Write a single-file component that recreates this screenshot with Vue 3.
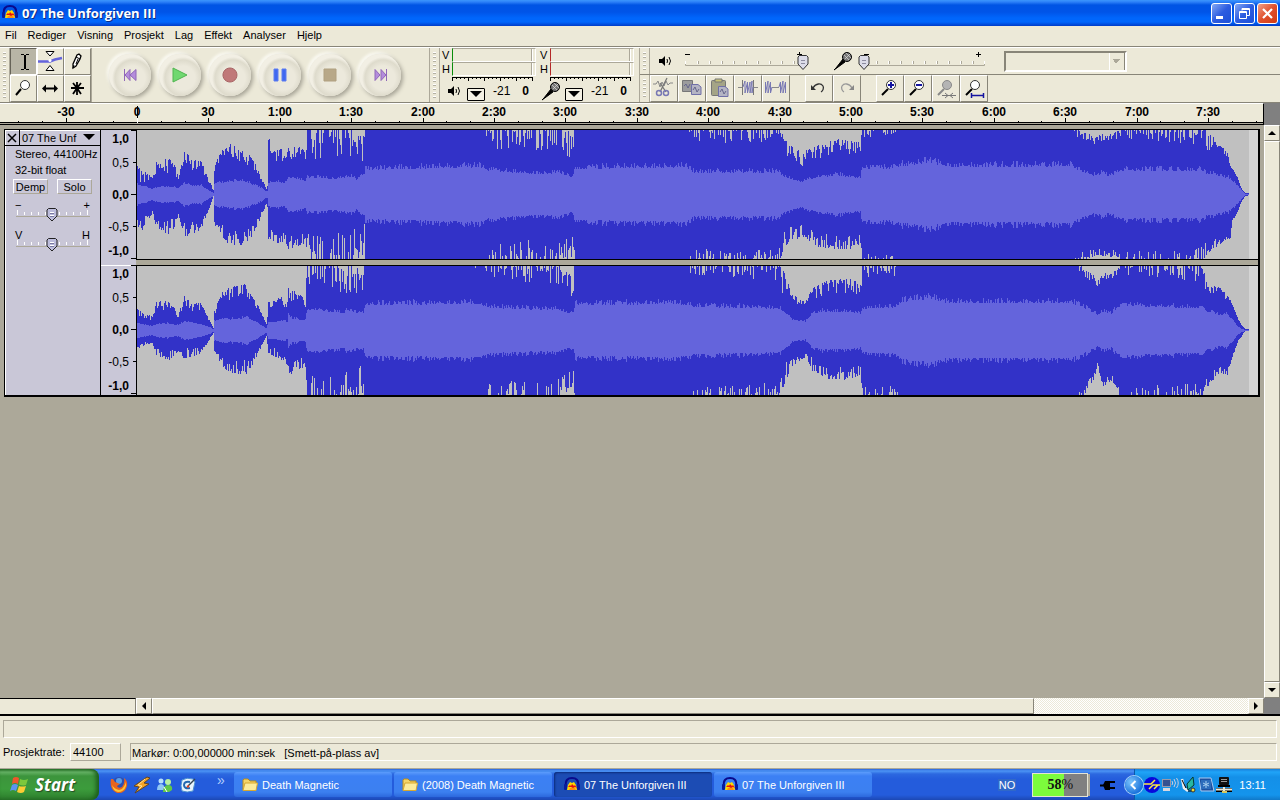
<template>
  <div class="desktop">
    <header class="title-bar">
      <svg class="app-icon" viewBox="0 0 16 16">
        <path d="M2 9 C1 3 4 1 8 1 C12 1 15 3 14 9" fill="none" stroke="#0a0a8c" stroke-width="2" />
        <path d="M3 13 L4 8 L6 5 L8 6 L10 5 L12 8 L13 13 Z" fill="#ffd800" />
        <path d="M4 10 L6 8 L7 9 L8 7 L10 9 L11 8 L13 11 L11 10 L9 11 L7 10 Z" fill="#e81010" />
        <path d="M5 13 L12 13 L11 11 L6 11 Z" fill="#ff8c10" />
        <rect x="0" y="7" width="3" height="6" rx="1" fill="#0a1c9c" />
        <rect x="13" y="7" width="3" height="6" rx="1" fill="#0a1c9c" />
      </svg>
      <h1>07 The Unforgiven III</h1>
      <div class="window-buttons">
        <button aria-label="Minimer">
          <svg viewBox="0 0 21 21"><rect x="5" y="13" width="7" height="3" fill="#fff" /></svg>
        </button>
        <button aria-label="Gjenopprett">
          <svg viewBox="0 0 21 21" fill="none" stroke="#fff">
            <path d="M8 7.5V5.5H15.5V12.5H13M8 6.5H15" />
            <path d="M5.5 8.5H12.5V15.5H5.5ZM5 9.5H12" />
          </svg>
        </button>
        <button class="close" aria-label="Lukk">
          <svg viewBox="0 0 21 21"><path d="M6 6L15 15M15 6L6 15" stroke="#fff" stroke-width="2.2" /></svg>
        </button>
      </div>
    </header>

    <nav class="menu-bar">
      <a v-for="item in menus" :key="item" href="#">{{ item }}</a>
    </nav>

    <section class="toolbars">
      <div class="toolbar">
        <div class="grip"></div>
        <div class="tool-grid">
          <button class="tool active" aria-label="Markeringsverktøy">
            <svg viewBox="0 0 27 27" fill="none" stroke="#000" shape-rendering="crispEdges">
              <path d="M11 6.500H14M16 6.500H19M15 7V21M11 21.500H14M16 21.500H19" stroke-width="1" />
              <path d="M15 7V21" stroke-width="2" />
            </svg>
          </button>
          <button class="tool" aria-label="Konvoluttverktøy">
            <svg viewBox="0 0 27 27">
              <path d="M1 13.500H13L18 11.500L25 10" fill="none" stroke="#6464dc" stroke-width="2.500" />
              <path d="M9 3.500H17L13 8ZM9 22.500H17L13 17.500Z" fill="#fff" stroke="#000" />
              <circle cx="13" cy="12.500" r="1.500" fill="#fff" />
            </svg>
          </button>
          <button class="tool" aria-label="Tegneverktøy">
            <svg viewBox="0 0 27 27">
              <path d="M9 20L9 16L13 7L15 6L17 8L16 11L12 18Z" fill="#fff" stroke="#000" stroke-width="1.3" />
              <path d="M12 9L16 11M12 16L14 11M9 20L10 17" stroke="#000" />
            </svg>
          </button>
          <button class="tool" aria-label="Zoomverktøy">
            <svg viewBox="0 0 27 27">
              <path d="M11 14L6 20" stroke="#000" stroke-width="2" />
              <circle cx="15" cy="10" r="4.500" fill="#fff" stroke="#333" />
            </svg>
          </button>
          <button class="tool" aria-label="Tidsforskyvning">
            <svg viewBox="0 0 27 27"><path d="M5 13.500L9 9.500V12.500H17V9.500L21 13.500L17 17.500V14.500H9V17.500Z" /></svg>
          </button>
          <button class="tool" aria-label="Multiverktøy">
            <svg viewBox="0 0 27 27">
              <path d="M13 7V20M7 13H20M9 19L13 13L17 19M9 8L13 13L17 8" fill="none" stroke="#000" stroke-width="1.800" />
            </svg>
          </button>
        </div>
      </div>

      <div class="toolbar transport">
        <button v-for="t in transport" :key="t.label" class="disc" :aria-label="t.label">
          <svg viewBox="0 0 24 24">
            <path :d="t.path" :fill="t.color" :stroke="t.edge" />
          </svg>
        </button>
      </div>

      <div class="toolbar">
        <div class="grip"></div>
        <div v-for="m in meters" :key="m.kind" class="meter">
          <div v-for="ch in ['V', 'H']" :key="ch" class="meter-row">
            <span>{{ ch }}</span>
            <div class="meter-bar" :class="m.kind"></div>
          </div>
          <svg class="meter-scale" viewBox="0 0 82 5">
            <path d="M0 0.500H80" stroke="#000" />
            <path v-for="n in 21" :key="n" :d="`M${(n - 1) * 4 + 0.5} 0V${(n - 1) % 4 ? 2 : 4}`" stroke="#000" />
          </svg>
          <div class="meter-foot">
            <svg v-if="m.kind === 'play'" class="foot-icon" viewBox="0 0 20 20">
              <path d="M5 8H8L11 5V15L8 12H5Z" />
              <path d="M13 8Q14 10 13 12M15 6Q18 10 15 14" fill="none" stroke="#000" />
            </svg>
            <svg v-else class="foot-icon" viewBox="0 0 20 20">
              <path d="M10 8L3 17L1 19L12 11Z" stroke="#000" />
              <circle cx="14" cy="6" r="4.500" fill="#777" stroke="#000" />
              <path d="M11 4L16 9M13 2L18 7M12 8L17 3" stroke="#ddd" stroke-width="0.7" />
            </svg>
            <button class="meter-menu" aria-label="Nivåmeny">
              <svg viewBox="0 0 18 13"><path d="M3 3H15L9 9Z" /></svg>
            </button>
            <span>-21</span>
            <b>0</b>
          </div>
        </div>
      </div>

      <div class="right-bars">
        <div class="bar-row">
          <div class="grip"></div>
          <div v-for="(s, i) in mixer" :key="s.label" class="mixer-item">
            <svg v-if="i === 0" class="foot-icon" viewBox="0 0 20 20">
              <path d="M5 8H8L11 5V15L8 12H5Z" />
              <path d="M13 8Q14 10 13 12M15 6Q18 10 15 14" fill="none" stroke="#000" />
            </svg>
            <svg v-else class="foot-icon" viewBox="0 0 20 20">
              <path d="M10 8L3 17L1 19L12 11Z" stroke="#000" />
              <circle cx="14" cy="6" r="4.500" fill="#777" stroke="#000" />
              <path d="M11 4L16 9M13 2L18 7M12 8L17 3" stroke="#ddd" stroke-width="0.7" />
            </svg>
            <div class="slider mixer-slider">
              <svg viewBox="0 0 134 26">
                <path d="M8.500 13V17.500H128.500V13" fill="none" stroke="#aca899" />
                <path
                  v-for="n in 11"
                  :key="n"
                  :d="`M${(n - 1) * 12 + 8.5} 13V16`"
                  stroke="#fff"
                />
                <path v-for="n in 9" :key="`s${n}`" :d="`M${n * 12 + 9.5} 13V16`" stroke="#aca899" />
                <path d="M8 6.500H13M120 6.500H125M122.500 4V9" stroke="#000" />
                <g :transform="`translate(${8 + s.value * 1.18} 8)`">
                  <path d="M-5 1L-3.500 -0.500H3.500L5 1V8L0 13.500L-5 8Z" fill="#dcdce8" stroke="#333" />
                  <path d="M-2 4.500H2M-2 7.500H2" stroke="#8c8ca0" />
                </g>
              </svg>
              <input v-model.number="s.value" type="range" min="0" max="100" :aria-label="s.label" />
            </div>
          </div>
          <select class="source" disabled aria-label="Inngangskilde">
            <option></option>
          </select>
        </div>
        <div class="bar-row edit-row">
          <div class="grip"></div>
          <button class="tool" aria-label="Klipp ut">
            <svg viewBox="0 0 27 27" fill="none">
              <path d="M3 9H6L8 6L10 12L12 7L14 11L16 6L18 10L20 8H23" stroke="#888" />
              <path d="M17 3L10 17M10 8L16 17" stroke="#777" stroke-width="1.3" />
              <circle cx="9" cy="18" r="2.500" stroke="#7878b4" stroke-width="1.5" />
              <circle cx="16" cy="18" r="2.500" stroke="#7878b4" stroke-width="1.5" />
            </svg>
          </button>
          <button class="tool" aria-label="Kopier">
            <svg viewBox="0 0 27 27">
              <path d="M4.500 5.500H14.500V16.500H4.500Z" fill="#9c9c9c" stroke="#777" />
              <path d="M13.500 9.500H20L23 12V19.500H13.500Z" fill="#b4b4c4" stroke="#7070a8" />
              <path d="M6 11L8 9L10 13L12 9M15 15L17 12L19 17L21 14" fill="none" stroke="#66668c" />
            </svg>
          </button>
          <button class="tool" aria-label="Lim inn">
            <svg viewBox="0 0 27 27">
              <rect x="5.500" y="5.500" width="14" height="15" rx="1" fill="#a4a486" stroke="#777" />
              <path d="M9 7V4H16V7Z" fill="#c8c478" stroke="#777" />
              <path d="M12.500 11.500H19L22 14V21.500H12.500Z" fill="#b4b4c4" stroke="#7070a8" />
              <path d="M14 17L16 14L18 19L20 16" fill="none" stroke="#66668c" />
            </svg>
          </button>
          <button class="tool" aria-label="Trim">
            <svg viewBox="0 0 27 27" fill="none">
              <path d="M4 12.500H8M19 12.500H24" stroke="#888" />
              <path d="M8.500 5V20M19.500 5V20" stroke="#777" />
              <path d="M9 12L11 6V18L13.500 7V18L16 7V18L18 6V18L19 12" stroke="#7878b4" />
            </svg>
          </button>
          <button class="tool" aria-label="Stilne">
            <svg viewBox="0 0 27 27" fill="none">
              <path d="M10 12.500H17" stroke="#888" />
              <path d="M3.500 12V7V18L6 6V18L8.500 7V18L10 12M17 12L18.500 7V18L21 6V18L23.500 7V18" stroke="#7878b4" />
            </svg>
          </button>
          <div class="spacer"></div>
          <button class="tool" aria-label="Angre">
            <svg viewBox="0 0 27 27">
              <path d="M8 13C11 8 16 8 18 11C19 13 18 16 16 17" fill="none" stroke="#333" stroke-width="1.300" />
              <path d="M6 10V15H11Z" fill="#333" />
            </svg>
          </button>
          <button class="tool" aria-label="Gjør om" disabled>
            <svg viewBox="0 0 27 27">
              <path d="M19 13C16 8 11 8 9 11C8 13 9 16 11 17" fill="none" stroke="#999" stroke-width="1.300" />
              <path d="M21 10V15H16Z" fill="#888" />
            </svg>
          </button>
          <div class="spacer"></div>
          <button v-for="z in zooms" :key="z.label" class="tool" :aria-label="z.label">
            <svg viewBox="0 0 27 27" fill="none">
              <path d="M12 14L6 20" :stroke="z.dim ? '#888' : '#000'" stroke-width="2" />
              <circle cx="15" cy="10" r="4.500" :fill="z.dim ? '#b4b4b4' : '#fff'" :stroke="z.dim ? '#888' : '#333'" />
              <path :d="z.mark" :stroke="z.dim ? '#777' : '#1414a0'" :stroke-width="z.weight" />
            </svg>
          </button>
        </div>
      </div>
    </section>

    <section class="ruler-row">
      <svg class="time-ruler">
        <g shape-rendering="crispEdges" stroke="#000">
          <path v-for="t in ticks" :key="t.x" :d="`M${t.x + 0.5} ${t.major ? 14 : 17}V19`" />
          <path d="M137.500 2V14" />
          <path d="M137.500 14V19" stroke="#fff" />
        </g>
        <text v-for="l in labels" :key="l.text" :x="l.x" y="12" text-anchor="middle">{{ l.text }}</text>
      </svg>
      <div class="corner"></div>
    </section>

    <main class="workspace">
      <div class="track-area">
        <article class="track">
          <div class="track-panel">
            <div class="track-head">
              <button class="track-close" aria-label="Lukk spor">
                <svg viewBox="0 0 14 15"><path d="M3 4L11 12M11 4L3 12" stroke="#000" stroke-width="1.5" /></svg>
              </button>
              <button class="track-name">
                <span>07 The Unf</span>
                <svg viewBox="0 0 12 7"><path d="M0 0H12L6 6Z" /></svg>
              </button>
            </div>
            <p>Stereo, 44100Hz</p>
            <p>32-bit float</p>
            <div class="track-buttons">
              <button>Demp</button>
              <button>Solo</button>
            </div>
            <div v-for="s in trackSliders" :key="s.label" class="track-slider">
              <div class="ends"><span>{{ s.low }}</span><span>{{ s.high }}</span></div>
              <div class="slider">
                <svg viewBox="0 0 76 14">
                  <path d="M1 8.500H75" stroke="#aca899" />
                  <path v-for="n in 11" :key="n" :d="`M${(n - 1) * 7 + 2.5} ${n % 10 === 1 ? 2 : 4}V7`" stroke="#fff" />
                  <g :transform="`translate(${s.value * 0.72 + 1} 0)`">
                    <path d="M-5 2L-3.500 0.500H3.500L5 2V8L0 13L-5 8Z" fill="#bcbcdc" stroke="#222" />
                    <path d="M-2 4.500H2M-2 7.500H2" stroke="#fff" />
                    <path d="M-2 5.500H2M-2 8.500H2" stroke="#7878a0" />
                  </g>
                </svg>
                <input v-model.number="s.value" type="range" min="0" max="100" :aria-label="s.label" />
              </div>
            </div>
          </div>
          <div class="channels">
            <div v-for="(c, i) in channels" :key="i" class="channel">
              <svg class="level-ruler" viewBox="0 0 35 130">
                <text v-for="l in levels" :key="l.text" x="28" :y="l.y" :class="{ strong: l.strong }" text-anchor="end">
                  {{ l.text }}
                </text>
                <path d="M30 0.500H35M32 32.500H35M30 64.500H35M32 96.500H35M30 128.500H35" stroke="#000" />
              </svg>
              <div class="wave-view">
                <svg class="wave" viewBox="0 0 1112 129" shape-rendering="crispEdges">
                  <rect width="1112" height="129" fill="#c0c0c0" />
                  <path :d="c.peak" fill="#3232c8" />
                  <path :d="c.rms" fill="#6464dc" />
                </svg>
              </div>
            </div>
          </div>
        </article>
      </div>
      <div class="v-scroll">
        <button aria-label="Rull opp"><svg viewBox="0 0 8 8"><path d="M0 6H8L4 2Z" /></svg></button>
        <div class="thumb"></div>
        <button aria-label="Rull ned"><svg viewBox="0 0 8 8"><path d="M0 2H8L4 6Z" /></svg></button>
      </div>
    </main>

    <div class="h-scroll">
      <div class="h-blank"></div>
      <button aria-label="Rull til venstre"><svg viewBox="0 0 8 8"><path d="M6 0V8L2 4Z" /></svg></button>
      <div class="h-track"><div class="thumb"></div></div>
      <button aria-label="Rull til høyre"><svg viewBox="0 0 8 8"><path d="M2 0V8L6 4Z" /></svg></button>
      <div class="corner"></div>
    </div>

    <footer class="status">
      <div class="sunken message"></div>
      <div class="status-row">
        <label for="rate">Prosjektrate:</label>
        <input id="rate" v-model="rate" class="rate" type="text" />
        <div class="sunken cursor-info">Markør: 0:00,000000 min:sek &nbsp; [Smett-på-plass av]</div>
      </div>
    </footer>

    <div class="taskbar">
      <button class="start">
        <svg viewBox="0 0 20 18">
          <path d="M3 2Q6 0 9 2L8 8Q5 6 2 8Z" fill="#f0562c" />
          <path d="M10 3Q14 5 18 3L16 9Q13 10 9 8.500Z" fill="#7cc83c" />
          <path d="M2 9Q5 7 8 9L6 15Q3 13 0 15Z" fill="#5c94f0" />
          <path d="M9 10Q12 11 16 10L14 16Q11 18 7 16Z" fill="#fccc34" />
        </svg>
        Start
      </button>
      <div class="quick">
        <button aria-label="Firefox">
          <svg viewBox="0 0 18 18">
            <circle cx="9" cy="8" r="7" fill="#2c50b4" />
            <circle cx="9" cy="5" r="3" fill="#58a0e8" />
            <path d="M1 3Q-1 14 7 17Q15 18 17 10Q18 5 14 2Q15 8 12 11Q8 13 7 10L10 8L5 6L3 3Z" fill="#e8641c" />
            <path d="M2 9Q3 15 8 16Q14 16 16 10L16 6Q14 13 9 14Q4 13 2 9Z" fill="#fcc434" />
          </svg>
        </button>
        <button aria-label="Winamp">
          <svg viewBox="0 0 18 18">
            <path d="M14 1L17 2L11 7L16 8L2 17L6 11L1 10Z" fill="#f4a428" stroke="#5c4428" />
            <path d="M12 3L5 9L9 10L6 13" fill="none" stroke="#ffe49c" />
          </svg>
        </button>
        <button aria-label="Messenger">
          <svg viewBox="0 0 18 18">
            <circle cx="5" cy="5" r="2.500" fill="#b8e0fc" />
            <path d="M1 14Q1 8 5 8Q9 8 8 14Z" fill="#90c8f4" />
            <circle cx="12" cy="6" r="3" fill="#b8f0a0" />
            <path d="M7 16Q7 9 12 9Q17 9 16 14L13 16Z" fill="#60c848" />
            <path d="M8 11L11 16" stroke="#fff" />
          </svg>
        </button>
        <button aria-label="Vis skrivebordet">
          <svg viewBox="0 0 18 18">
            <path d="M3 4Q8 1 14 3L16 6L14 15Q8 17 3 15Q1 10 3 4Z" fill="#e8f4fc" stroke="#4c90d0" />
            <path d="M11 6Q5 5 5 9Q5 13 11 12" fill="none" stroke="#2468b0" stroke-width="2" />
            <path d="M9 10L16 3" stroke="#345" stroke-width="1.5" />
            <path d="M8 11L10 10" stroke="#e04020" stroke-width="2" />
          </svg>
        </button>
        <span class="more">»</span>
      </div>
      <div class="tasks">
        <button v-for="(t, i) in tasks" :key="i" class="task" :class="{ active: t.active }">
          <svg v-if="t.folder" viewBox="0 0 16 16">
            <path d="M1 13V3L2 2H6L8 4H14V6" fill="#f4d468" stroke="#b88c1c" />
            <path d="M1 13.500L3 6H15.500L14 13.500Z" fill="#fcec9c" stroke="#d8a830" />
          </svg>
          <svg v-else viewBox="0 0 16 16">
            <path d="M2 9 C1 3 4 1 8 1 C12 1 15 3 14 9" fill="none" stroke="#0a0a8c" stroke-width="2" />
            <path d="M3 13 L4 8 L6 5 L8 6 L10 5 L12 8 L13 13 Z" fill="#ffd800" />
            <path d="M4 10 L6 8 L7 9 L8 7 L10 9 L11 8 L13 11 L11 10 L9 11 L7 10 Z" fill="#e81010" />
            <path d="M5 13 L12 13 L11 11 L6 11 Z" fill="#ff8c10" />
            <rect x="0" y="7" width="3" height="6" rx="1" fill="#0a1c9c" />
            <rect x="13" y="7" width="3" height="6" rx="1" fill="#0a1c9c" />
          </svg>
          {{ t.text }}
        </button>
      </div>
      <span class="lang">NO</span>
      <div class="battery"><b>58</b>%</div>
      <svg class="plug" viewBox="0 0 18 18">
        <path d="M4 9L6 5H11V14H6Z" />
        <path d="M1 9.500H5M11 6H16M11 12H16" stroke="#000" stroke-width="2" />
      </svg>
      <div class="tray">
        <button class="expand" aria-label="Vis skjulte ikoner">
          <svg viewBox="0 0 18 18"><path d="M10.500 5L6.500 9L10.500 13" fill="none" stroke="#fff" stroke-width="2" /></svg>
        </button>
        <svg viewBox="0 0 18 18">
          <circle cx="9" cy="9" r="8" fill="#0808dc" />
          <path d="M1 8H8L12 4M6 13L10 9H17M11 13L15 9" fill="none" stroke="#fcec44" stroke-width="1.5" />
        </svg>
        <svg viewBox="0 0 18 18">
          <rect x="1.500" y="3.500" width="8" height="7" fill="#345090" stroke="#99a" />
          <path d="M2 12H9V15H2Z" fill="#d8d8e0" />
          <path d="M11 5Q12.500 7 11 9M13 3Q16 7 13 11M15.500 2Q19 7 15.500 12" fill="none" stroke="#ccd" />
        </svg>
        <svg viewBox="0 0 18 18">
          <path d="M3 3L5 12L9 15" fill="none" stroke="#eee" stroke-width="2.500" />
          <path d="M14 1L15 9L9 14L8 8Z" fill="#28b8a0" stroke="#083830" />
          <path d="M3 4L7 12M9 15L14 15" stroke="#000" />
          <circle cx="14" cy="14" r="2" fill="#f0dc38" stroke="#333" />
        </svg>
        <svg viewBox="0 0 18 18">
          <path d="M2 2H14L17 15H4Z" fill="#1c50a0" stroke="#a8c8f0" />
          <rect x="4" y="4" width="10" height="9" fill="#2c6cbc" />
          <path d="M9 5V12M6 7L12 10M12 7L6 10" stroke="#a8d0f0" />
        </svg>
        <svg viewBox="0 0 18 18">
          <rect x="4" y="1" width="10" height="8" rx="1" fill="#111" />
          <path d="M6 3.500H12M6 5.500H12" stroke="#999" />
          <path d="M3 9H15V11H3Z" />
          <path d="M1 14H17" stroke="#000" stroke-width="4" />
          <path d="M1 13.500H17M9 11V15" stroke="#ece9d8" stroke-width="2" />
          <path d="M7 16H12" stroke="#d8c860" stroke-width="2" />
        </svg>
        <time>13:11</time>
      </div>
    </div>
  </div>
</template>

<script setup>
import { reactive, ref } from 'vue'

const menus = ['Fil', 'Rediger', 'Visning', 'Prosjekt', 'Lag', 'Effekt', 'Analyser', 'Hjelp']

const transport = [
  { label: 'Til start', path: 'M6.5 6V18M12 6.500V17.500L7 12ZM18 6.500V17.500L12 12Z', color: '#b48cdc', edge: '#9068b8' },
  { label: 'Spill av', path: 'M5 5L19 12L5 19Z', color: '#70d870', edge: '#50b450' },
  { label: 'Ta opp', path: 'M12 5A7 7 0 1 1 11.900 5Z', color: '#c07878', edge: '#a86464' },
  { label: 'Pause', path: 'M6 6H10V18H6ZM14 6H18V18H14Z', color: '#4068f0', edge: '#5c7cf0' },
  { label: 'Stopp', path: 'M6 6H18V18H6Z', color: '#b8a888', edge: '#b0a080' },
  { label: 'Til slutt', path: 'M18.500 6V18M7 6.500V17.500L12 12ZM13 6.500V17.500L18 12Z', color: '#b48cdc', edge: '#9068b8' }
]

const meters = [{ kind: 'play' }, { kind: 'record' }]

const mixer = reactive([
  { label: 'Utgangsvolum', value: 100 },
  { label: 'Inngangsvolum', value: 0 }
])

const trackSliders = reactive([
  { label: 'Forsterkning', low: '−', high: '+', value: 50 },
  { label: 'Panorering', low: 'V', high: 'H', value: 50 }
])

const zooms = [
  { label: 'Zoom inn', mark: 'M12 10H18M15 7V13', weight: 2 },
  { label: 'Zoom ut', mark: 'M12 10H18', weight: 2 },
  { label: 'Tilpass markering', mark: 'M10 20.500H24M13 18L16 20.500L13 23M21 18L18 20.500L21 23', weight: 1, dim: true },
  { label: 'Tilpass prosjekt', mark: 'M11 20.500H23M11.500 18V23M23.500 18V23', weight: 1.5 }
]

const tasks = [
  { text: 'Death Magnetic', folder: true },
  { text: '(2008) Death Magnetic', folder: true },
  { text: '07 The Unforgiven III', active: true },
  { text: '07 The Unforgiven III' }
]

const rate = ref('44100')

// time ruler, 10 seconds between two ticks
const origin = 137
const tenSeconds = 23.8
const ticks = []
const labels = []
for (let n = -5; n <= 47; n++) {
  const x = Math.round(origin + n * tenSeconds)
  const major = n % 3 === 0
  ticks.push({ x, major })
  if (major) {
    const s = Math.abs(n * 10)
    const short = s < 60 ? String(s) : `${Math.floor(s / 60)}:${String(s % 60).padStart(2, '0')}`
    labels.push({ x, text: n < 0 ? `-${short}` : short })
  }
}

const levels = [
  { text: '1,0', y: 13, strong: true },
  { text: '0,5', y: 37 },
  { text: '0,0', y: 69, strong: true },
  { text: '-0,5', y: 101 },
  { text: '-1,0', y: 125, strong: true }
]

// [x, peak up, peak down, rms, spread]
const left = [
  [0, 28, 33, 10, 10], [4, 24, 38, 9, 14], [9, 22, 26, 8, 8], [15, 16, 20, 5, 6], [19, 32, 32, 7, 12],
  [31, 37, 40, 8, 16], [38, 28, 32, 7, 11], [41, 16, 19, 6, 4], [47, 43, 43, 11, 17], [54, 36, 40, 9, 13],
  [64, 33, 34, 9, 9], [70, 18, 18, 5, 4], [76, 4, 2, 1, 1], [77, 28, 29, 11, 6], [83, 42, 40, 12, 12],
  [93, 50, 51, 13, 16], [104, 45, 50, 14, 14], [113, 38, 44, 11, 10], [121, 25, 28, 8, 6], [129, 6, 10, 3, 2],
  [130, 8, 12, 3, 1], [131, 56, 45, 12, 4], [132, 56, 45, 12, 4], [134, 42, 46, 13, 12], [148, 46, 50, 12, 13],
  [151, 48, 54, 18, 14], [162, 48, 52, 16, 14], [168, 42, 48, 14, 10], [170, 72, 74, 18, 38], [200, 71, 73, 16, 38],
  [214, 70, 73, 19, 42], [219, 50, 58, 15, 26], [223, 70, 68, 20, 42], [227, 60, 60, 20, 34], [228, 80, 80, 26, 10],
  [343, 80, 80, 29, 10], [350, 69, 75, 25, 24], [390, 69, 70, 22, 26], [420, 71, 72, 22, 26], [436, 60, 63, 18, 26],
  [438, 80, 80, 27, 10], [548, 80, 80, 29, 10], [556, 68, 71, 23, 18], [642, 67, 68, 23, 16], [646, 58, 54, 18, 24],
  [652, 50, 46, 17, 18], [657, 46, 46, 14, 12], [665, 42, 42, 13, 14], [672, 45, 46, 16, 14], [682, 50, 53, 18, 14],
  [700, 55, 54, 20, 14], [714, 53, 54, 18, 14], [723, 52, 50, 17, 12], [725, 69, 70, 27, 14], [757, 69, 70, 27, 10],
  [764, 80, 80, 30, 8], [793, 80, 80, 34, 8], [810, 80, 80, 29, 8], [934, 78, 80, 30, 12], [940, 64, 68, 26, 10],
  [959, 57, 60, 19, 9], [964, 60, 62, 22, 8], [972, 61, 62, 19, 9], [982, 64, 64, 24, 10], [984, 69, 71, 25, 14],
  [1065, 69, 71, 25, 20], [1069, 64, 60, 22, 22], [1076, 58, 54, 21, 18], [1080, 50, 54, 20, 16], [1086, 46, 46, 18, 9],
  [1090, 41, 45, 17, 6], [1093, 30, 43, 16, 6], [1095, 26, 26, 14, 2], [1100, 17, 18, 9, 2],
  [1104, 6, 7, 4, 1], [1108, 1, 1, 0, 0], [1112, 1, 0, 0, 0]
]
const right = [
  [0, 21, 18, 7, 7], [15, 13, 12, 4, 4], [19, 28, 25, 6, 9], [32, 30, 29, 7, 9], [41, 15, 20, 5, 4],
  [47, 36, 29, 9, 12], [53, 27, 26, 8, 9], [64, 27, 22, 6, 7], [70, 14, 12, 4, 2], [76, 3, 2, 1, 1],
  [77, 21, 21, 9, 5], [85, 38, 35, 11, 12], [93, 43, 43, 11, 13], [109, 46, 43, 13, 14], [113, 36, 38, 11, 9],
  [121, 24, 22, 7, 5], [129, 6, 5, 2, 1], [131, 28, 23, 8, 7], [143, 33, 28, 9, 10], [150, 32, 34, 9, 10],
  [151, 42, 42, 16, 14], [155, 42, 44, 12, 14], [168, 34, 36, 10, 11], [170, 70, 74, 22, 30], [200, 69, 74, 19, 28],
  [207, 58, 68, 18, 30], [210, 70, 70, 20, 30], [226, 58, 64, 18, 36], [228, 80, 80, 27, 10], [320, 80, 80, 28, 10],
  [343, 74, 79, 28, 14], [350, 68, 74, 24, 22], [390, 68, 71, 22, 22], [420, 68, 71, 22, 22], [436, 52, 54, 16, 22],
  [438, 80, 80, 27, 10], [540, 78, 80, 28, 14], [556, 68, 71, 25, 14], [642, 67, 68, 23, 18], [646, 60, 56, 20, 34],
  [651, 46, 44, 16, 16], [655, 36, 35, 11, 8], [668, 28, 26, 9, 4], [675, 42, 40, 18, 14], [690, 50, 48, 20, 14],
  [714, 51, 49, 19, 14], [723, 46, 44, 17, 12], [725, 67, 69, 23, 14], [757, 67, 69, 24, 16],
  [764, 80, 80, 30, 8], [793, 80, 80, 34, 8], [810, 80, 80, 29, 8], [934, 78, 80, 29, 12], [948, 59, 62, 23, 8],
  [955, 57, 52, 19, 9], [960, 48, 38, 16, 6], [965, 58, 56, 20, 8], [974, 58, 50, 17, 8], [979, 59, 56, 23, 8],
  [984, 69, 71, 26, 14], [1065, 66, 70, 23, 20], [1070, 44, 56, 20, 10], [1082, 44, 42, 16, 9],
  [1090, 36, 44, 17, 6], [1094, 28, 30, 12, 3], [1100, 13, 12, 4, 2], [1105, 4, 4, 1, 1],
  [1108, 1, 0, 0, 0], [1112, 1, 0, 0, 0]
]

function randomFrom(seed) {
  let s = seed
  return () => {
    s = (s * 16807) % 2147483647
    return s / 2147483647
  }
}

function outline(up, down) {
  const mid = 64
  let d = `M0 ${mid}`
  up.forEach((v, x) => { d += `V${mid - v}H${x + 1}` })
  for (let x = down.length - 1; x >= 0; x--) d += `V${mid + 1 + down[x]}H${x}`
  return d + 'Z'
}

function buildChannel(points, seed) {
  const rand = randomFrom(seed)
  const up = []
  const down = []
  const rms = []
  let k = 0
  for (let x = 0; x < 1112; x++) {
    while (k < points.length - 2 && points[k + 1][0] <= x) k++
    const a = points[k]
    const b = points[k + 1]
    const f = (x - a[0]) / (b[0] - a[0])
    const [u, dn, r, spread] = [1, 2, 3, 4].map((i) => a[i] + (b[i] - a[i]) * f)
    const limit = (v) => Math.max(0, Math.min(64, Math.round(v)))
    up.push(limit(u - spread * rand() ** 2))
    down.push(limit(dn - spread * rand() ** 2))
    rms.push(limit(r + (rand() ** 2 - 0.4) * r * 0.2))
  }
  return { peak: outline(up, down), rms: outline(rms, rms) }
}

const channels = [buildChannel(left, 4211), buildChannel(right, 977)]
</script>

<style>
body {
  margin: 0;
}
</style>

<style scoped>
.desktop {
  display: flex;
  flex-direction: column;
  height: 100vh;
  overflow: hidden;
  background: #ece9d8;
  font-family: "Liberation Sans", Arial, sans-serif;
  font-size: 11px;
  color: #000;
}

.desktop * {
  box-sizing: border-box;
}

button {
  padding: 0;
  border: 0;
  background: none;
  font: inherit;
  color: inherit;
}

svg {
  display: block;
  flex: none;
}

.title-bar {
  display: flex;
  align-items: center;
  height: 26px;
  padding: 0 2px;
  background: linear-gradient(#3c96fc 0, #2c80f8 2px, #0054e4 5px, #0054e8 12px, #0066fc 18px, #0066fc 22px, #003cc8 26px);
}

.app-icon {
  width: 16px;
  height: 16px;
}

.title-bar h1 {
  flex: 1;
  margin: 0 0 0 4px;
  font: bold 13px "Open Sans", "Noto Sans", sans-serif;
  color: #fff;
  text-shadow: 1px 1px 0 #0c2c84;
}

.window-buttons {
  display: flex;
  gap: 2px;
}

.window-buttons button {
  width: 21px;
  height: 21px;
  border: 1px solid #fff;
  border-radius: 3px;
  background: linear-gradient(135deg, #84a8f4, #2c5ce0 50%, #1c50d8);
}

.window-buttons button svg {
  width: 21px;
  height: 21px;
  margin: -1px;
}

.window-buttons .close {
  background: linear-gradient(135deg, #f0a088, #e0502c 50%, #d03c14);
}

.menu-bar {
  display: flex;
  gap: 11px;
  height: 21px;
  padding: 0 5px;
  line-height: 18px;
  border-bottom: 1px solid #888578;
}

.menu-bar a {
  color: #000;
  text-decoration: none;
}

.toolbars {
  display: flex;
  height: 56px;
  border-top: 1px solid #fff;
  border-bottom: 1px solid #888578;
}

.toolbar {
  display: flex;
  border-right: 1px solid #aca899;
}

.grip {
  width: 10px;
  padding: 4px 3px;
  border-right: 1px solid #aca899;
  flex: none;
  background: repeating-linear-gradient(#fff 0 1px, #b4b1a2 1px 2px, #ece9d8 2px 4px) content-box;
}

.tool-grid {
  display: grid;
  grid-template-columns: repeat(3, 27px);
  grid-template-rows: repeat(2, 27px);
}

.tool {
  width: 27px;
  height: 27px;
  border: 1px solid;
  border-color: #fff #888578 #888578 #fff;
}

.tool svg {
  width: 27px;
  height: 27px;
  margin: -1px;
}

.tool.active {
  background: #b8b5a6;
  border-color: #666358 #fff #fff #666358;
}

.transport {
  align-items: center;
  gap: 8px;
  width: 338px;
  padding-left: 17px;
}

.disc {
  display: grid;
  place-items: center;
  width: 42px;
  height: 42px;
  border-radius: 50%;
  background: radial-gradient(circle at 24px 24px, #ece9dc 12px, #dedbcc 18px, #f2efe4 21px);
  box-shadow: 2px 2px 4px #a4a194, -2px -2px 3px #fcfbf4;
}

.disc svg {
  width: 24px;
  height: 24px;
}

.meter {
  width: 98px;
  padding: 0 2px;
}

.meter:last-child {
  width: 101px;
}

.meter-row {
  display: flex;
  height: 14px;
  line-height: 14px;
}

.meter-row span {
  width: 10px;
}

.meter-bar {
  width: 84px;
  height: 14px;
  border: 1px solid;
  border-color: #aca899 #fff #fff #0a8c0a;
  background: linear-gradient(90deg, #ece9d8 78px, #aca899 78px 79px, #fff 79px 80px, #ece9d8 80px);
}

.meter-bar.record {
  border-left-color: #b42828;
}

.meter-scale {
  width: 82px;
  height: 5px;
  margin: 1px 0 0 10px;
}

.meter-foot {
  display: flex;
  align-items: center;
  height: 18px;
  font-size: 12px;
}

.foot-icon {
  width: 20px;
  height: 20px;
}

.meter-foot .foot-icon {
  margin: 0 4px 0 1px;
}

.meter-menu {
  width: 18px;
  height: 13px;
  margin-top: 6px;
  border: 1px solid #000;
  border-radius: 1px;
  background: #f4f1e4;
}

.meter-menu svg {
  width: 18px;
  height: 13px;
  margin: -1px;
}

.meter-foot span {
  margin-left: 8px;
}

.meter-foot b {
  margin-left: 12px;
}

.right-bars {
  flex: 1;
  min-width: 0;
}

.bar-row {
  display: flex;
  height: 27px;
}

.bar-row:first-child {
  align-items: center;
  border-bottom: 1px solid #888578;
}

.bar-row:first-child .grip {
  align-self: stretch;
}

.mixer-item {
  display: flex;
  align-items: center;
  gap: 3px;
  margin-left: 4px;
}

.mixer-item + .mixer-item {
  margin-left: 22px;
}

.slider {
  display: grid;
}

.slider > * {
  grid-area: 1 / 1;
}

.slider input {
  appearance: none;
  width: 100%;
  height: 100%;
  margin: 0;
  background: transparent;
}

.slider input::-webkit-slider-thumb {
  appearance: none;
  width: 11px;
  height: 14px;
  background: transparent;
}

.mixer-slider svg {
  width: 134px;
  height: 26px;
}

.source {
  appearance: none;
  width: 123px;
  height: 21px;
  margin-left: 14px;
  border: 2px solid;
  border-color: #888578 #fff #fff #888578;
  border-radius: 0;
  opacity: 1;
  background:
    conic-gradient(from 315deg at 50% 100%, #aca899 90deg, transparent 0) right 5px center / 8px 4px no-repeat,
    linear-gradient(90deg, #fff 1px, #ece9d8 1px 15px, #888578 15px) right / 16px 100% no-repeat,
    #ece9d8;
}

.spacer {
  width: 15px;
}

.edit-row .tool {
  width: 28px;
}

.ruler-row,
.h-scroll {
  display: flex;
}

.time-ruler {
  flex: 1;
  min-width: 0;
  height: 22px;
  border: solid;
  border-width: 1px 1px 1px 0;
  border-color: #fff #000 #000 #fff;
  box-shadow: inset 0 -1px #aca899, inset 0 -2px #000;
  overflow: hidden;
}

.time-ruler text {
  font-size: 12px;
  font-weight: bold;
}

.corner {
  width: 16px;
  background: #808080;
}

.workspace {
  display: flex;
  flex: 1;
  min-height: 0;
}

.track-area {
  flex: 1;
  min-width: 0;
  padding: 4px 4px 0;
  background: #aca899;
}

.track {
  display: flex;
  border: 1px solid #000;
  border-right-width: 2px;
  border-bottom-width: 2px;
  background: #aca899;
}

.track-panel {
  width: 96px;
  flex: none;
  border-right: 1px solid #000;
  background: #c9c7d7;
  box-shadow: inset 1px 1px #fff;
}

.track-head {
  display: flex;
  height: 16px;
  border-bottom: 1px solid #000;
}

.track-close {
  width: 15px;
  border-right: 1px solid #000;
}

.track-close svg {
  width: 14px;
  height: 15px;
}

.track-name {
  display: flex;
  align-items: center;
  justify-content: space-between;
  flex: 1;
  padding: 0 5px 0 2px;
}

.track-name svg {
  width: 12px;
  height: 7px;
}

.track-panel p {
  margin: 0 0 0 10px;
  line-height: 16px;
  white-space: nowrap;
}

.track-buttons {
  display: flex;
  gap: 9px;
  margin: 1px 8px 7px;
}

.track-buttons button {
  width: 35px;
  height: 15px;
  border: 1px solid;
  border-color: #fff #aca899 #aca899 #fff;
}

.track-slider {
  margin: 0 10px 9px;
}

.ends {
  display: flex;
  justify-content: space-between;
  height: 7px;
  line-height: 8px;
}

.track-slider .slider svg {
  width: 76px;
  height: 14px;
}

.channels {
  flex: 1;
  min-width: 0;
}

.channel {
  display: flex;
  height: 130px;
}

.channel + .channel {
  margin-top: 5px;
}

.level-ruler {
  width: 35px;
  height: 130px;
  background: #c9c7d7;
  box-shadow: 0 5px #c9c7d7;
}

.channel + .channel .level-ruler {
  box-shadow: inset 0 1px #fff;
}

.level-ruler text {
  font-size: 12px;
}

.level-ruler .strong {
  font-weight: bold;
}

.wave-view {
  flex: 1;
  min-width: 0;
  overflow: hidden;
  border-left: 1px solid #000;
  border-bottom: 1px solid #000;
  background: #d4d4d4;
}

.channel + .channel .wave-view {
  border-top: 1px solid #000;
  border-bottom: 0;
}

.wave {
  width: 1112px;
  height: 129px;
}

.v-scroll {
  display: flex;
  flex-direction: column;
  width: 16px;
}

.v-scroll button,
.h-scroll button {
  display: grid;
  place-items: center;
  width: 16px;
  height: 16px;
  flex: none;
}

.v-scroll button,
.h-scroll button,
.thumb {
  border: 1px solid;
  border-color: #fff #888578 #888578 #fff;
  background: #ece9d8;
}

.v-scroll svg,
.h-scroll svg {
  width: 8px;
  height: 8px;
}

.v-scroll .thumb {
  flex: 1;
}

.h-scroll {
  height: 18px;
  border-bottom: 2px solid #000;
}

.h-blank {
  width: 136px;
  border-top: 1px solid #000;
  border-right: 1px solid #888578;
  flex: none;
}

.h-track {
  flex: 1;
  background: repeating-conic-gradient(#fff 0 25%, #ece9d8 0 50%) 0 0 / 2px 2px;
}

.h-track .thumb {
  width: 80.5%;
  height: 16px;
}

.status {
  height: 53px;
  padding: 4px 3px 0;
  border-bottom: 1px solid #aca899;
}

.sunken {
  height: 18px;
  border: 1px solid;
  border-color: #aca899 #fff #fff #aca899;
}

.status-row {
  display: flex;
  margin-top: 5px;
  line-height: 19px;
}

.status-row label {
  width: 67px;
}

.rate {
  width: 51px;
  height: 18px;
  padding: 1px 2px 0;
  border: 1px solid;
  border-color: #fff #aca899 #aca899 #fff;
  background: #ece9d8;
  font: inherit;
}

.cursor-info {
  flex: 1;
  margin-left: 9px;
  padding-left: 1px;
  line-height: 18px;
}

.taskbar {
  display: flex;
  height: 31px;
  align-items: center;
  background: linear-gradient(#2c64dc 0, #4c94f4 2px, #2c68e0 5px, #245cdc 10px, #245cdc 26px, #1c48b4 31px);
  color: #fff;
}

.start {
  display: flex;
  align-items: center;
  gap: 5px;
  width: 99px;
  height: 31px;
  padding-left: 10px;
  border-radius: 0 8px 8px 0;
  background: linear-gradient(#2c7c2c 0, #68b468 3px, #3c943c 7px, #3c9c3c 20px, #2c7c2c 31px);
  box-shadow: inset -3px 0 4px #1c5c1c;
  font: italic bold 17px "Open Sans", "Noto Sans", sans-serif;
  text-shadow: 1px 1px 1px #244c24;
}

.start svg {
  width: 20px;
  height: 18px;
}

.quick {
  display: flex;
  gap: 5px;
  width: 135px;
  padding-left: 11px;
}

.quick svg,
.plug,
.tray svg {
  width: 18px;
  height: 18px;
}

.more {
  margin-left: 15px;
  font-size: 14px;
  line-height: 8px;
  color: #b4d0fc;
}

.tasks {
  display: flex;
  flex: 1;
  gap: 2px;
  min-width: 0;
}

.task {
  display: flex;
  align-items: center;
  gap: 4px;
  width: 158px;
  height: 25px;
  padding-left: 8px;
  border-radius: 3px;
  background: linear-gradient(#5c9cfc 0, #3c80f4 4px, #3c80f0 20px, #2c68dc 25px);
  white-space: nowrap;
}

.task svg {
  width: 16px;
  height: 16px;
}

.task.active {
  padding-left: 10px;
  background: #1c4cb4;
  box-shadow: inset 1px 1px 2px #0c2c7c;
}

.lang {
  padding: 0 1px;
  margin-right: 16px;
  background: #3068c8;
}

.battery {
  width: 56px;
  height: 24px;
  margin-right: 11px;
  border: 1px solid #e4e4d4;
  background: linear-gradient(90deg, #7cfc3c 31px, #808080 31px);
  box-shadow: 3px 0 0 -1px #aca899;
  font: 14px/22px "Liberation Serif", serif;
  text-align: center;
  color: #111;
}

.plug {
  margin-right: 17px;
}

.tray {
  display: flex;
  align-items: center;
  height: 31px;
  padding-right: 14px;
  background: linear-gradient(#1880dc 0, #20a4f8 3px, #1490e8 8px, #1494ec 26px, #1078c8 31px);
  box-shadow: inset 1px 0 #0c58a8;
}

.tray .expand {
  margin-left: -9px;
  border-radius: 50%;
  background: radial-gradient(circle at 6px 6px, #7cc4fc, #1c74dc 70%);
  box-shadow: 0 0 0 1px #a4d0f8;
}

.tray time {
  margin-left: 6px;
}
</style>
